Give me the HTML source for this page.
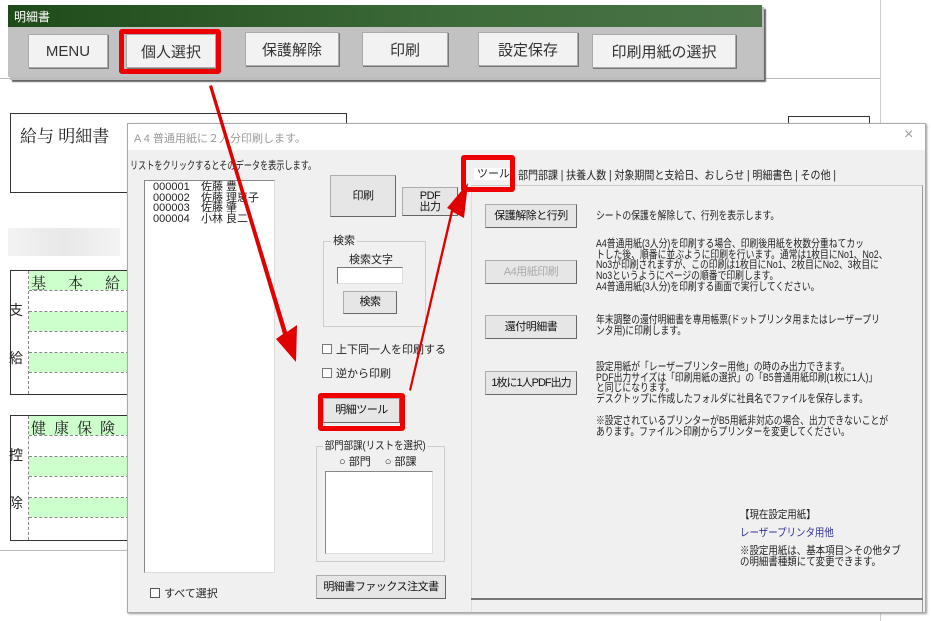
<!DOCTYPE html>
<html><head><meta charset="utf-8">
<style>
*{box-sizing:border-box;margin:0;padding:0}
body{width:931px;height:621px;position:relative;overflow:hidden;background:#fff;font-family:"Liberation Sans","Noto Sans CJK JP",sans-serif;color:#222}
.a{position:absolute}
.tb{font-size:15px;background:#f2f2f2;border:1px solid #aaa;box-shadow:1px 1px 0 #777;display:flex;align-items:center;justify-content:center;color:#333}
.btn{position:absolute;background:#e6e6e6;border:1px solid #adadad;border-right-color:#666;border-bottom-color:#666;font-size:11px;display:flex;align-items:center;justify-content:center;text-align:center;line-height:11px;color:#111;letter-spacing:-0.5px}
.red{position:absolute;border:5px solid #e00;border-radius:3px}
.t{position:absolute;font-size:11px;line-height:12px;color:#222;white-space:nowrap;transform-origin:0 0}
.s8{transform:scaleX(0.8)}
.s85{transform:scaleX(0.86)}
.cb{display:inline-block;width:10px;height:10px;border:1px solid #555;background:#fff;vertical-align:-1px;margin-right:4px}
.grp{position:absolute;border:1px solid #ccc}
.grn{background:#ccffcc}
</style></head><body>
<div class="a" style="left:0;top:78px;width:880px;height:1px;background:#bbb"></div>
<div class="a" style="left:880px;top:0;width:1px;height:621px;background:#ccc"></div>
<div class="a" style="left:10px;top:113px;width:337px;height:80px;border:1px solid #333"></div>
<div class="a" style="left:20px;top:122px;font-size:17px;font-family:'Liberation Serif','Noto Serif CJK SC',serif">給与 明細書</div>
<div class="a" style="left:788px;top:116px;width:82px;height:10px;border:1px solid #333;border-bottom:none"></div>
<div class="a" style="left:8px;top:228px;width:112px;height:28px;background:linear-gradient(90deg,#f3f3f3,#e8e8e8 50%,#f4f4f4)"></div>
<div class="a" style="left:0;top:550px;width:128px;height:1px;background:#bbb"></div>
<div class="a" style="left:10px;top:270px;width:120px;height:125px;border:1px solid #333;border-right:none"></div>
<div class="a" style="left:28px;top:271px;width:1px;height:123px;border-left:1px dashed #888"></div>
<div class="a grn" style="left:29px;top:271px;width:100px;height:19px"></div>
<div class="a grn" style="left:29px;top:312px;width:100px;height:19px"></div>
<div class="a grn" style="left:29px;top:353px;width:100px;height:19px"></div>
<div class="a" style="left:29px;top:290px;width:100px;border-top:1px dashed #888"></div>
<div class="a" style="left:29px;top:311px;width:100px;border-top:1px dashed #888"></div>
<div class="a" style="left:29px;top:331px;width:100px;border-top:1px dashed #888"></div>
<div class="a" style="left:29px;top:352px;width:100px;border-top:1px dashed #888"></div>
<div class="a" style="left:29px;top:372px;width:100px;border-top:1px dashed #888"></div>
<div class="a" style="left:31px;top:272px;font-size:15px;letter-spacing:22px;font-family:'Liberation Serif','Noto Serif CJK SC',serif">基本給</div>
<div class="a" style="left:9px;top:300px;font-size:14px">支</div>
<div class="a" style="left:9px;top:348px;font-size:14px">給</div>
<div class="a" style="left:10px;top:415px;width:120px;height:126px;border:1px solid #333;border-right:none"></div>
<div class="a" style="left:28px;top:416px;width:1px;height:124px;border-left:1px dashed #888"></div>
<div class="a grn" style="left:29px;top:416px;width:100px;height:19px"></div>
<div class="a grn" style="left:29px;top:457px;width:100px;height:19px"></div>
<div class="a grn" style="left:29px;top:498px;width:100px;height:19px"></div>
<div class="a" style="left:29px;top:435px;width:100px;border-top:1px dashed #888"></div>
<div class="a" style="left:29px;top:456px;width:100px;border-top:1px dashed #888"></div>
<div class="a" style="left:29px;top:476px;width:100px;border-top:1px dashed #888"></div>
<div class="a" style="left:29px;top:497px;width:100px;border-top:1px dashed #888"></div>
<div class="a" style="left:29px;top:517px;width:100px;border-top:1px dashed #888"></div>
<div class="a" style="left:31px;top:417px;font-size:15px;letter-spacing:8px;font-family:'Liberation Serif','Noto Serif CJK SC',serif">健康保険</div>
<div class="a" style="left:9px;top:445px;font-size:14px">控</div>
<div class="a" style="left:9px;top:493px;font-size:14px">除</div>

<div class="a" style="left:10px;top:7px;width:754px;height:73px;background:#bdbdbd;box-shadow:2px 2px 1px #666"></div>
<div class="a" style="left:8px;top:5px;width:754px;height:22px;background:linear-gradient(90deg,#1f4a1a,#3e6b3a 60%,#4a7448);color:#fff;font-size:12px;padding:3px 0 0 6px">明細書</div>
<div class="a" style="left:8px;top:27px;width:754px;height:50px;background:#c2c2c2"></div>
<div class="a tb" style="left:28px;top:34px;width:80px;height:34px">MENU</div>
<div class="a tb" style="left:126px;top:34px;width:90px;height:34px">個人選択</div>
<div class="red" style="left:119px;top:29px;width:102px;height:45px"></div>
<div class="a tb" style="left:245px;top:32px;width:94px;height:34px">保護解除</div>
<div class="a tb" style="left:362px;top:32px;width:86px;height:34px">印刷</div>
<div class="a tb" style="left:478px;top:32px;width:100px;height:34px">設定保存</div>
<div class="a tb" style="left:592px;top:34px;width:144px;height:34px">印刷用紙の選択</div>

<div class="a" style="left:127px;top:123px;width:799px;height:490px;background:#f0f0f0;border:1px solid #aaa;box-shadow:1px 1px 2px #999"></div>
<div class="a" style="left:128px;top:124px;width:797px;height:26px;background:#fff"></div>
<div class="a" style="left:134px;top:130px;font-size:11px;color:#999">A 4 普通用紙に２人分印刷します。</div>
<div class="a" style="left:904px;top:126px;font-size:16px;color:#999">×</div>
<div class="t s8" style="left:130px;top:160px;transform:scaleX(0.74)">リストをクリックするとそのデータを表示します。</div>
<div class="a" style="left:144px;top:180px;width:131px;height:393px;background:#fff;border:1px solid #888;border-right-color:#ddd;border-bottom-color:#ddd"></div>
<div class="t" style="left:153px;top:182px;line-height:10.5px">000001<br>000002<br>000003<br>000004</div>
<div class="t" style="left:201px;top:182px;line-height:10.5px">佐藤 豊<br>佐藤 理恵子<br>佐藤 肇<br>小林 良二</div>
<div class="t" style="left:150px;top:588px"><span class="cb"></span>すべて選択</div>

<div class="btn" style="left:330px;top:175px;width:66px;height:42px">印刷</div>
<div class="btn" style="left:402px;top:187px;width:56px;height:29px">PDF<br>出力</div>
<div class="grp" style="left:323px;top:241px;width:103px;height:86px"></div>
<div class="t" style="left:331px;top:235px;background:#f0f0f0;padding:0 2px">検索</div>
<div class="t" style="left:349px;top:254px">検索文字</div>
<div class="a" style="left:337px;top:267px;width:66px;height:17px;background:#fff;border:1px solid #777;border-right-color:#ddd;border-bottom-color:#ddd"></div>
<div class="btn" style="left:343px;top:291px;width:54px;height:23px">検索</div>
<div class="t" style="left:322px;top:344px"><span class="cb" style="border-color:#777"></span>上下同一人を印刷する</div>
<div class="t" style="left:322px;top:368px"><span class="cb" style="border-color:#777"></span>逆から印刷</div>
<div class="btn" style="left:323px;top:398px;width:77px;height:25px">明細ツール</div>
<div class="red" style="left:318px;top:393px;width:87px;height:38px"></div>
<div class="grp" style="left:316px;top:446px;width:129px;height:116px"></div>
<div class="t s85" style="left:323px;top:440px;background:#f0f0f0;padding:0 2px">部門部課(リストを選択)</div>
<div class="t" style="left:339px;top:456px">○ 部門　 ○ 部課</div>
<div class="a" style="left:325px;top:471px;width:108px;height:83px;background:#fff;border:1px solid #888;border-right-color:#ddd;border-bottom-color:#ddd"></div>
<div class="btn" style="left:316px;top:575px;width:130px;height:24px">明細書ファックス注文書</div>

<div class="a" style="left:471px;top:185px;width:452px;height:427px;border-top:1px solid #ccc;border-left:1px solid #ddd;border-right:1px solid #999"></div>
<div class="t" style="left:474px;top:168px;background:#fff;padding:0 3px">ツール</div>
<div class="red" style="left:461px;top:155px;width:54px;height:37px"></div>
<div class="t" style="left:518px;top:170px;font-size:11.5px;transform:scaleX(0.87)">部門部課 | 扶養人数 | 対象期間と支給日、おしらせ | 明細書色 | その他 |</div>

<div class="btn" style="left:485px;top:204px;width:92px;height:24px">保護解除と行列</div>
<div class="t s8" style="left:596px;top:210px">シートの保護を解除して、行列を表示します。</div>
<div class="btn" style="left:485px;top:260px;width:92px;height:24px;color:#aaa">A4用紙印刷</div>
<div class="t s8" style="left:596px;top:239px;line-height:10.7px">A4普通用紙(3人分)を印刷する場合、印刷後用紙を枚数分重ねてカッ<br>トした後、順番に並ぶように印刷を行います。通常は1枚目にNo1、No2、<br>No3が印刷されますが、この印刷は1枚目にNo1、2枚目にNo2、3枚目に<br>No3というようにページの順番で印刷します。<br>A4普通用紙(3人分)を印刷する画面で実行してください。</div>
<div class="btn" style="left:485px;top:315px;width:92px;height:24px">還付明細書</div>
<div class="t s8" style="left:596px;top:315px;line-height:10.7px">年末調整の還付明細書を専用帳票(ドットプリンタ用またはレーザープリ<br>ンタ用)に印刷します。</div>
<div class="btn" style="left:485px;top:371px;width:92px;height:24px;letter-spacing:-1px">1枚に1人PDF出力</div>
<div class="t s8" style="left:596px;top:362px;line-height:10.7px">設定用紙が「レーザープリンター用他」の時のみ出力できます。<br>PDF出力サイズは「印刷用紙の選択」の「B5普通用紙印刷(1枚に1人)」<br>と同じになります。<br>デスクトップに作成したフォルダに社員名でファイルを保存します。</div>
<div class="t s8" style="left:596px;top:416px;line-height:10.7px">※設定されているプリンターがB5用紙非対応の場合、出力できないことが<br>あります。ファイル＞印刷からプリンターを変更してください。</div>
<div class="t s85" style="left:740px;top:509px">【現在設定用紙】</div>
<div class="t s85" style="left:740px;top:527px;color:#33339a">レーザープリンタ用他</div>
<div class="t s85" style="left:740px;top:546px;line-height:11px">※設定用紙は、基本項目＞その他タブ<br>の明細書種類にて変更できます。</div>
<div class="a" style="left:471px;top:598px;width:452px;height:2px;background:#777"></div>

<svg class="a" style="left:0;top:0" width="931" height="621">
<polygon fill="#e00000" points="209,86 212,85 287,332 297,325 296,362 276,339 283,334"/>
<polygon fill="#e00000" points="409,390 411,391 453,212 464,218 468,183 447,208 451,210"/>
</svg>
</body></html>
